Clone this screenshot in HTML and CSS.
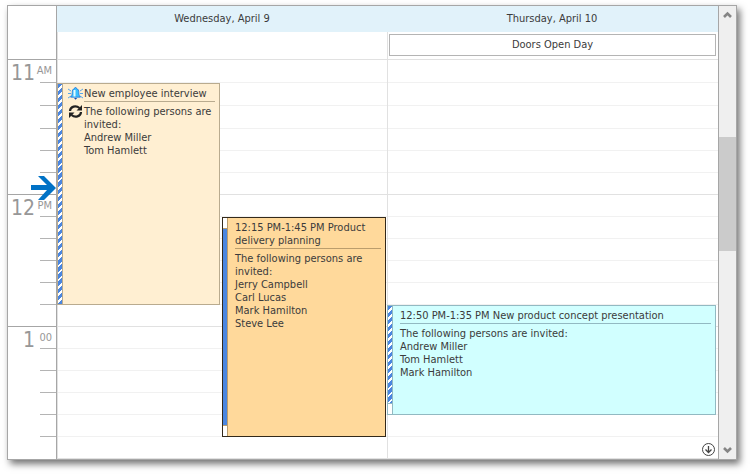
FILE: index.html
```html
<!DOCTYPE html>
<html lang="en">
<head>
    <meta charset="UTF-8">
    <title>Scheduler - Work Days</title>
    <link rel="stylesheet" href="styles.css">
</head>
<body>
    <div class="scheduler">
        <div class="ruler">
            <div class="ruler-corner"></div>
            <div class="hour first-hour">
                <div class="hour-label"><span>11</span><small>AM</small></div>
                <div class="tick"></div><div class="tick"></div><div class="tick"></div>
                <div class="tick"></div><div class="tick"></div>
                <svg class="now" viewBox="0 0 25 24" width="25" height="24"><path fill="#0072c6" d="M0 9H16L7 0H13L25 12L13 24H7L16 14H0Z"/></svg>
            </div>
            <div class="hour">
                <div class="hour-label"><span>12</span><small>PM</small></div>
                <div class="tick"></div><div class="tick"></div><div class="tick"></div>
                <div class="tick"></div><div class="tick"></div>
            </div>
            <div class="hour">
                <div class="hour-label"><span>1</span><small>00</small></div>
                <div class="tick"></div><div class="tick"></div><div class="tick"></div>
                <div class="tick"></div><div class="tick"></div>
            </div>
        </div>

        <div class="days">
            <div class="day-headers">
                <div class="day-header">Wednesday, April 9</div>
                <div class="day-header">Thursday, April 10</div>
            </div>
            <div class="all-day">
                <div class="all-day-cell"></div>
                <div class="all-day-cell"><div class="all-day-event">Doors Open Day</div></div>
            </div>
            <div class="time-area">
                <div class="slots" id="slots"></div>
                <div class="day-columns">
                    <div class="day-column two-up">
                        <div class="appointment interview">
                            <div class="status"><div class="tentative"></div></div>
                            <div class="icons">
                                <svg viewBox="0 0 15 13" width="15" height="13">
                                    <path d="M0 2L3 4M0 6.5H3M0 11L3 9M15 2L12 4M15 6.5H12M15 11L12 9" stroke="#58a6ea" fill="none"/>
                                    <path d="M7.5 .5C8.3 .5 8.5 1 8.5 1.6C10.3 2 10.8 3.5 10.8 5.5C10.8 8 11.3 8.6 12.3 10.2H2.7C3.7 8.6 4.2 8 4.2 5.5C4.2 3.5 4.7 2 6.5 1.6C6.5 1 6.7 .5 7.5 .5Z" fill="#3cc0ff" stroke="#1668d8" stroke-width=".7"/>
                                    <path d="M6.5 3V9.5" stroke="#e6fbff" stroke-width="2"/>
                                    <path d="M6 11H9.2L7.6 12.8Z" fill="#1450b8"/>
                                </svg>
                                <svg viewBox="0 0 15 13" width="15" height="13" fill="none" stroke="#222" stroke-width="2.2">
                                    <path d="M2 6C2.3 1.2 8 0 11.5 3"/>
                                    <path d="M13 7C12.7 11.8 7 13 3.500 10"/>
                                    <path d="M14 0V5.500H8.500ZM1 13V7.500H6.500Z" fill="#222" stroke="none"/>
                                </svg>
                            </div>
                            <div class="details">
                                <div class="subject">New employee interview</div>
                                <div>The following persons are invited:<br>Andrew Miller<br>Tom Hamlett</div>
                            </div>
                        </div>
                        <div class="appointment planning">
                            <div class="status"><div class="busy"></div></div>
                            <div class="details">
                                <div class="subject">12:15 PM-1:45 PM Product delivery planning</div>
                                <div>The following persons are invited:<br>Jerry Campbell<br>Carl Lucas<br>Mark Hamilton<br>Steve Lee</div>
                            </div>
                        </div>
                    </div>
                    <div class="day-column">
                        <div class="appointment presentation">
                            <div class="status"><div class="tentative"></div></div>
                            <div class="details">
                                <div class="subject">12:50 PM-1:35 PM New product concept presentation</div>
                                <div>The following persons are invited:<br>Andrew Miller<br>Tom Hamlett<br>Mark Hamilton</div>
                            </div>
                        </div>
                    </div>
                </div>
                <button class="more" aria-label="More appointments">
                    <svg viewBox="0 0 13 13" width="13" height="13" fill="none" stroke="#444">
                        <circle cx="6.5" cy="6.5" r="6"/>
                        <path d="M6.5 3V9.5M3.5 6.5L6.5 9.5L9.5 6.5" stroke-width="1.3"/>
                    </svg>
                </button>
            </div>
        </div>

        <div class="scrollbar">
            <button aria-label="Scroll up"><svg viewBox="0 0 9 7" width="9" height="7"><path d="M1 6L4.500 2.500L8 6" fill="none" stroke="#858585" stroke-width="2.600"/></svg></button>
            <div class="track"><div class="thumb"></div></div>
            <button aria-label="Scroll down"><svg viewBox="0 0 9 7" width="9" height="7"><path d="M1 1L4.500 4.500L8 1" fill="none" stroke="#858585" stroke-width="2.600"/></svg></button>
        </div>
    </div>

    <script>
        // ten minute slots, six to an hour
        const slots = document.getElementById('slots');
        for (let i = 1; i <= 18; i++) {
            const slot = document.createElement('div');
            slot.className = i % 6 === 0 ? 'slot hour-end' : 'slot';
            slots.appendChild(slot);
        }
    </script>
</body>
</html>
```
FILE: styles.css
```css
* {
    box-sizing: border-box;
}
body {
    --rows: repeat(3, 23px) repeat(15, 22px);
    margin: 0;
    padding: 5px 13px 15px 7px;
    background-color: #fff;
    color: #3b3b3b;
    font-family: Tahoma, "DejaVu Sans Condensed", "DejaVu Sans", sans-serif;
    font-size: 11px;
    line-height: 13px;
}
button {
    display: flex;
    align-items: center;
    justify-content: center;
    padding: 0;
    border: none;
    background: none;
    cursor: pointer;
}
.scheduler {
    display: flex;
    border: 1px solid #a6a6a6;
    background-color: #fff;
    box-shadow: 3px 4px 7px rgba(0, 0, 0, 0.55);
}

/* time ruler */
.ruler {
    width: 49px;
    border-right: 1px solid #a6a6a6;
    color: #979797;
}
.ruler-corner {
    height: 54px;
    border-bottom: 1px solid #a6a6a6;
}
.hour {
    position: relative;
    display: grid;
    grid-template-rows: repeat(6, 22px);
    border-bottom: 1px solid #a6a6a6;
    height: 132px;
}
.first-hour {
    grid-template-rows: repeat(3, 23px) repeat(3, 22px);
    height: 135px;
}
.hour:last-child {
    border-bottom: none;
}
.tick {
    grid-column: 1;
    margin-left: 32px;
    border-bottom: 1px solid #b4b4b4;
}
.hour-label {
    position: absolute;
    top: 0;
    right: 4px;
    display: flex;
    gap: 1px;
}
.hour-label span {
    font-size: 21px;
    line-height: 26px;
}
.hour-label small {
    width: 16px;
    font-size: 11px;
    line-height: 22px;
    text-align: right;
}
.now {
    position: absolute;
    right: 0;
    bottom: -6px;
}

/* days */
.days {
    flex: 1;
    min-width: 0;
}
.day-headers,
.all-day,
.day-columns {
    display: grid;
    grid-template-columns: 1fr 1fr;
    padding-right: 1px;
}
.day-headers {
    background-color: #e1f2fa;
}
.day-header {
    line-height: 26px;
    text-align: center;
}
.all-day {
    height: 28px;
    border-bottom: 1px solid #e1e1e1;
}
.all-day-cell {
    padding: 2px 1px 3px;
    border-left: 1px solid #e1e1e1;
}
.all-day-event {
    border: 1px solid #b4b4b4;
    line-height: 20px;
    text-align: center;
}
.time-area {
    position: relative;
}
.slots {
    display: grid;
    grid-template-rows: var(--rows);
}
.slot {
    border-bottom: 1px solid #f1f1f1;
}
.hour-end {
    border-color: #e1e1e1;
}
.day-columns {
    position: absolute;
    inset: 0;
}
.day-column {
    display: grid;
    grid-template-rows: var(--rows);
    padding-right: 1px;
    background: linear-gradient(#e1e1e1, #e1e1e1) left / 1px 100% no-repeat;
}
.two-up {
    grid-template-columns: 1fr 1fr;
    column-gap: 1px;
}

/* appointments */
.appointment {
    display: flex;
    border: 1px solid #b9ab8f;
}
.interview {
    grid-area: 2 / 1 / 12 / 2;
    margin-right: 1px;
    background-color: #ffefd2;
}
.planning {
    grid-area: 8 / 2 / 18 / 3;
    border-color: #33291b;
    background-color: #ffd99b;
}
.presentation {
    grid-row: 12 / 17;
    border-color: #92b9c2;
    background-color: #d1ffff;
}
.status {
    flex: none;
    width: 5px;
    border-right: 1px solid #b9ab8f;
    border-color: inherit;
    background-color: #fff;
}
.planning .status,
.planning .subject {
    border-color: #bb9d6c;
}
.tentative {
    height: 100%;
    background: repeating-linear-gradient(135deg, #4a86e0 0 3px, #fff 3px 5px);
}
.busy {
    height: 198px;
    margin-top: 10px;
    border: solid #bb9d6c;
    border-width: 1px 0;
    background-color: #4a86e0;
}
.presentation .tentative {
    height: 98px;
    border-bottom: 1px solid #92b9c2;
}
.icons {
    display: flex;
    flex-direction: column;
    gap: 5px;
    margin-right: -2px;
    padding: 3px 0 0 5px;
}
.details {
    flex: 1;
    padding: 3px 4px 0 7px;
    border-color: inherit;
}
.interview .details {
    padding-left: 3px;
}
.subject {
    margin-bottom: 3px;
    padding-bottom: 1px;
    border-bottom: 1px solid #b9ab8f;
}
.presentation .subject {
    border-color: #92b9c2;
}
.more {
    position: absolute;
    right: 3px;
    bottom: 3px;
}

/* scrollbar */
.scrollbar {
    display: flex;
    flex-direction: column;
    width: 18px;
    border-left: 1px solid #a6a6a6;
    background-color: #efefef;
}
.scrollbar button {
    height: 17px;
}
.track {
    flex: 1;
    padding-top: 114px;
}
.thumb {
    height: 114px;
    background-color: #cbcbcb;
}
```
